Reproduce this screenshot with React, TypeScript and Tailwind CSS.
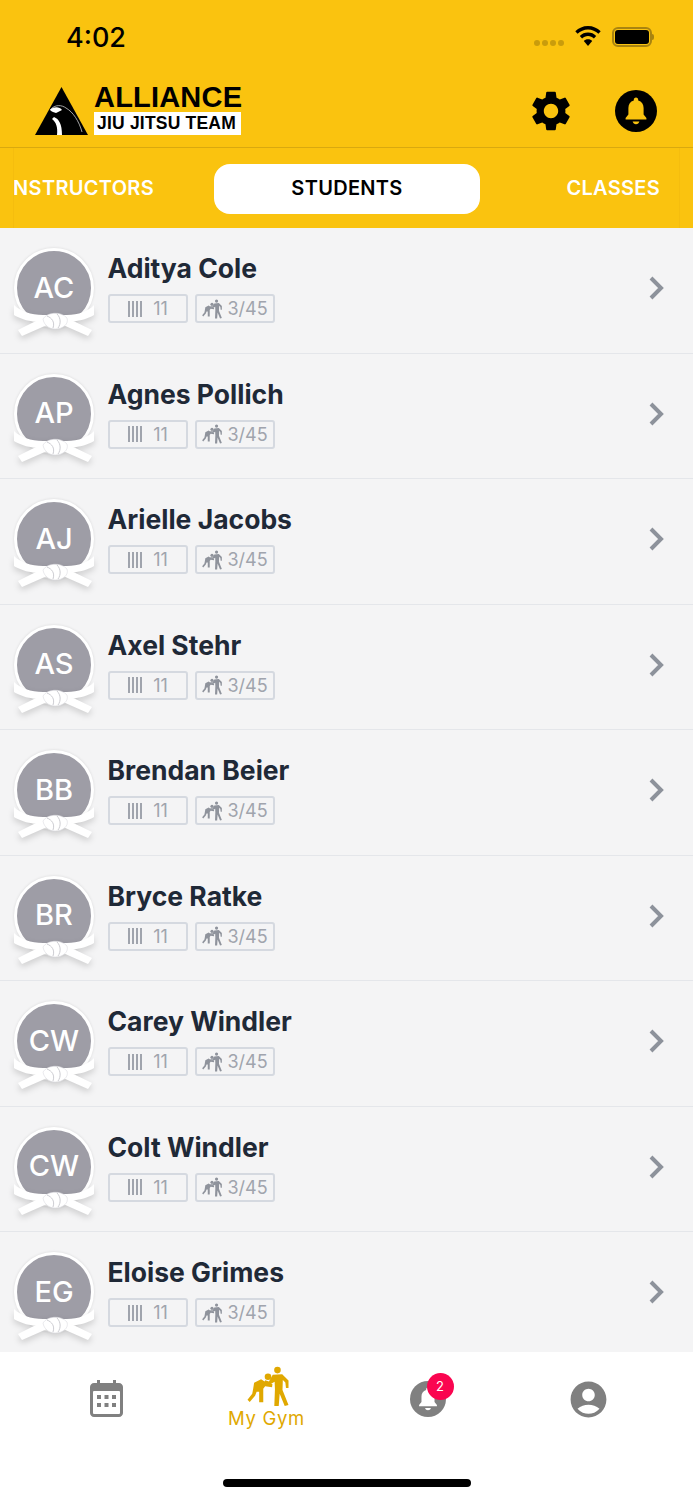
import { MdSettings, MdAccountCircle } from 'react-icons/md';

const students = [
  { initials: 'AC', name: 'Aditya Cole' },
  { initials: 'AP', name: 'Agnes Pollich' },
  { initials: 'AJ', name: 'Arielle Jacobs' },
  { initials: 'AS', name: 'Axel Stehr' },
  { initials: 'BB', name: 'Brendan Beier' },
  { initials: 'BR', name: 'Bryce Ratke' },
  { initials: 'CW', name: 'Carey Windler' },
  { initials: 'CW', name: 'Colt Windler' },
  { initials: 'EG', name: 'Eloise Grimes' },
];

function Fighters({ className }: { className: string }) {
  return (
    <svg viewBox="0 8 132 130" className={className} fill="currentColor">
      <circle cx="96" cy="21" r="10.500" />
      <circle cx="66" cy="42" r="10.500" />
      <path d="M81 36 L111 34 L131 54 L131 78 L123 78 L121 60 L113 52 L112 84 L131 132 L119 135 L103 96 L100 135 L86 135 L88 82 L87 58 L72 67 L54 60 L57 53 L69 57 Z" />
      <path d="M22 61 L44 50 L58 59 L80 65 L79 75 L57 72 L51 80 L51 123 L38 123 L38 90 L30 90 L25 102 L8 122 L1 115 L16 96 L19 80 Z" />
    </svg>
  );
}

function Bell({ className, circle, bell }: { className: string; circle: string; bell: string }) {
  return (
    <svg viewBox="0 0 42 42" className={className}>
      <circle cx="21" cy="21" r="21" fill={circle} />
      <path
        d="M21 7.500c-1.300 0-2.200 1-2.200 2.200v.8c-3.600 1-5.400 4-5.400 7.600v6.400L10.600 28v1.600h20.800V28l-2.800-3.500v-6.400c0-3.600-1.800-6.600-5.400-7.600v-.8c0-1.200-.9-2.200-2.200-2.200z"
        fill={bell}
      />
      <path d="M17.600 31.600h6.800c-.4 1.600-1.800 2.600-3.400 2.600s-3-1-3.400-2.600z" fill={bell} />
    </svg>
  );
}

function Belt() {
  return (
    <svg viewBox="0 0 82 37" className="absolute left-[13px] top-[72px] w-[82px] h-[37px] drop-shadow-[0_3px_3px_rgba(0,0,0,0.16)]">
      <path d="M1 5 C7 11 18 15 30 15 L54 15 C65 15 76 11 81 5 L81 15 C74 19 62 23 54 20 L30 20 C20 24 8 19 1 15 Z" fill="#fff" />
      <path d="M5 30 L31 17 L34 25 L9 36 Z" fill="#fff" />
      <path d="M79 30 L52 17 L50 25 L75 36 Z" fill="#fff" />
      <path d="M30 19 C34 12 48 11 54 18 C56 24 50 29 42 29 C36 29 31 25 30 19 Z" fill="#fff" stroke="#dcdce0" strokeWidth="0.6" />
      <path d="M34 16 C39 18 42 22 40 28 M44 14 C48 18 48 24 45 28" fill="none" stroke="#c6c6cc" strokeWidth="0.9" />
    </svg>
  );
}

function StudentRow({ initials, name }: { initials: string; name: string }) {
  return (
    <div className="h-[125.5px] shrink-0 flex items-start border-b border-[#e4e6ea] relative">
      <div className="relative w-[108px] h-full shrink-0">
        <div className="absolute left-[14px] top-[20px] w-[80px] h-[80px] rounded-full border-[3px] border-white bg-[#9e9da6] flex items-center justify-center pb-[1px] text-white text-[29px] font-medium shadow-[0_0_3px_rgba(0,0,0,0.12)]">
          {initials}
        </div>
        <Belt />
      </div>
      <div className="flex-1 pt-[22px]">
        <div className="text-[26.500px] leading-[36px] font-bold text-[#1f2937] -ml-[0.5px]">{name}</div>
        <div className="flex gap-[7px] mt-[8px] text-[#a0a4ad] text-[18px]">
          <div className="w-[80px] h-[29px] border-2 border-[#d5d9e0] rounded-[3px] flex items-center justify-center gap-[11px]">
            <div className="flex gap-[2px] h-[16px]">
              <span className="w-[2px] bg-[#a0a4ad]" />
              <span className="w-[2px] bg-[#a0a4ad]" />
              <span className="w-[2px] bg-[#a0a4ad]" />
              <span className="w-[2px] bg-[#a0a4ad]" />
            </div>
            <span>11</span>
          </div>
          <div className="w-[80px] h-[29px] border-2 border-[#d5d9e0] rounded-[3px] flex items-center justify-center gap-[5px]">
            <Fighters className="w-[20px] h-[20px] text-[#8f939c]" />
            <span>3/45</span>
          </div>
        </div>
      </div>
      <svg viewBox="0 0 16 24" className="w-[16px] h-[24px] mr-[29px] mt-[48px] shrink-0" fill="none" stroke="#8d929b" strokeWidth="4">
        <path d="M3 2 L13 12 L3 22" />
      </svg>
    </div>
  );
}

export default function App() {
  return (
    <div className="relative w-[693px] h-[1500px] flex flex-col overflow-hidden bg-[#f4f4f5] [font-family:Inter,sans-serif]">
      <header className="bg-[#fac30f] shrink-0">
        <div className="h-[76px] flex items-center justify-between pl-[66px] pr-[39px]">
          <span className="text-[27px] font-medium text-black">4:02</span>
          <div className="flex items-center">
            <div className="flex gap-[2px] mr-[11px] mt-[9px]">
              <span className="w-[6px] h-[6px] rounded-full bg-[#c99c0c]" />
              <span className="w-[6px] h-[6px] rounded-full bg-[#c99c0c]" />
              <span className="w-[6px] h-[6px] rounded-full bg-[#c99c0c]" />
              <span className="w-[6px] h-[6px] rounded-full bg-[#c99c0c]" />
            </div>
            <svg viewBox="0 0 26 20" className="w-[26px] h-[20px] mr-[11px] -mt-[4px]" fill="black">
              <path d="M13 0C8 0 3.700 2 .3 5.200l2.300 2.500C5.400 5 9 3.400 13 3.400s7.600 1.600 10.400 4.300l2.300-2.500C22.300 2 18 0 13 0z" />
              <path d="M13 6.600c-3.200 0-6 1.200-8.200 3.300l2.300 2.500c1.500-1.500 3.600-2.400 5.900-2.400s4.400.9 5.900 2.400l2.300-2.500C19 7.800 16.200 6.600 13 6.600z" />
              <path d="M13 13.200c-1.700 0-3.200.7-4.200 1.700L13 20l4.200-5.100c-1-1-2.500-1.700-4.200-1.700z" />
            </svg>
            <div className="w-[40px] h-[20px] border-2 border-[#a98410] rounded-[6px] p-[1px] -mt-[2px]">
              <div className="w-full h-full bg-black rounded-[3px]" />
            </div>
            <div className="w-[2px] h-[6px] bg-[#a98410] rounded-r-sm -mt-[2px]" />
          </div>
        </div>
        <div className="h-[72px] flex items-center justify-between pl-[35px] pr-[36px] border-b border-[#d9a90f]">
          <div className="flex items-end gap-[6px] h-[50px] -mt-[3px]">
            <svg viewBox="0 0 53 48" className="w-[53px] h-[48px]">
              <path d="M26.500 0 L53 48 H0 Z" fill="#000" />
              <path d="M15 23 C20 17 27 18 31 21 C38 25 44 34 47 45" fill="none" stroke="#e8e8e8" strokeWidth="0.7" />
              <path d="M15 23 C19 19 25 20 27 23 L21 26 C19 25 17 25 15 23Z" fill="#fff" />
              <path d="M19 30 C24 32 27 37 27 48 L22 48 C23 40 21 35 17 32Z" fill="#fff" />
            </svg>
            <div className="w-[147px] flex flex-col [font-family:'Liberation_Sans',sans-serif] font-bold text-black">
              <span className="text-[29px] leading-[25px] tracking-[0.2px]">ALLIANCE</span>
              <span className="bg-white h-[23px] mt-[2px] pl-[3px] text-[17.500px] leading-[23px] tracking-[0.2px] whitespace-nowrap">JIU JITSU TEAM</span>
            </div>
          </div>
          <div className="flex items-center gap-[40px] -mt-[2px]">
            <MdSettings className="w-[48px] h-[48px] text-black" />
            <Bell className="w-[42px] h-[42px]" circle="#000" bell="#fac30f" />
          </div>
        </div>
        <nav className="h-[80px] mx-[13px] border-x border-[#f5bd0e] flex items-center font-semibold text-[20px] tracking-[0.3px] text-white">
          <div className="w-[140px] shrink-0 overflow-hidden flex justify-end whitespace-nowrap">
            <span>INSTRUCTORS</span>
          </div>
          <div className="w-[266px] h-[50px] ml-[60px] mt-[2px] pb-[2px] bg-white rounded-[16px] flex items-center justify-center text-black">
            STUDENTS
          </div>
          <div className="flex-1 text-right pr-[19px]">CLASSES</div>
        </nav>
      </header>

      <main className="flex-1 min-h-0 overflow-hidden flex flex-col">
        {students.map((s) => (
          <StudentRow key={s.name} initials={s.initials} name={s.name} />
        ))}
      </main>

      <footer className="h-[148px] shrink-0 bg-white grid grid-cols-[187px_160px_161px_185px] items-start">
        <div className="flex justify-center pl-[26px] pt-[28px]">
          <svg viewBox="0 0 33 37" className="w-[33px] h-[37px]">
            <path d="M7 0h3v3h13V0h3v3h3c2.200 0 4 1.800 4 4v26c0 2.200-1.800 4-4 4H4c-2.200 0-4-1.800-4-4V7c0-2.200 1.800-4 4-4h3z" fill="#808080" />
            <rect x="3" y="11" width="27" height="23" rx="1" fill="#fff" />
            <rect x="7" y="15" width="4" height="4" fill="#808080" />
            <rect x="14.500" y="15" width="4" height="4" fill="#808080" />
            <rect x="22" y="15" width="4" height="4" fill="#808080" />
            <rect x="7" y="23" width="4" height="4" fill="#808080" />
            <rect x="14.500" y="23" width="4" height="4" fill="#808080" />
            <rect x="22" y="23" width="4" height="4" fill="#808080" />
          </svg>
        </div>
        <div className="flex flex-col items-center pt-[14px] -ml-[1px] text-[#e0a800]">
          <Fighters className="w-[42px] h-[41px] ml-[3px]" />
          <span className="text-[18.500px] leading-[22px] tracking-[0.7px]">My Gym</span>
        </div>
        <div className="flex justify-center pt-[29px]">
          <div className="relative w-[36px] h-[36px]">
            <Bell className="w-[36px] h-[36px]" circle="#808080" bell="#fff" />
            <span className="absolute -top-[8px] left-[17px] w-[27px] h-[27px] rounded-full bg-[#fa0550] text-white text-[13px] flex items-center justify-center">2</span>
          </div>
        </div>
        <div className="flex justify-center pr-[25px] pt-[26px]">
          <MdAccountCircle className="w-[43px] h-[43px] text-[#808080]" />
        </div>
      </footer>
      <div className="absolute left-[223px] top-[1479px] w-[248px] h-[8px] rounded-full bg-black" />
    </div>
  );
}
